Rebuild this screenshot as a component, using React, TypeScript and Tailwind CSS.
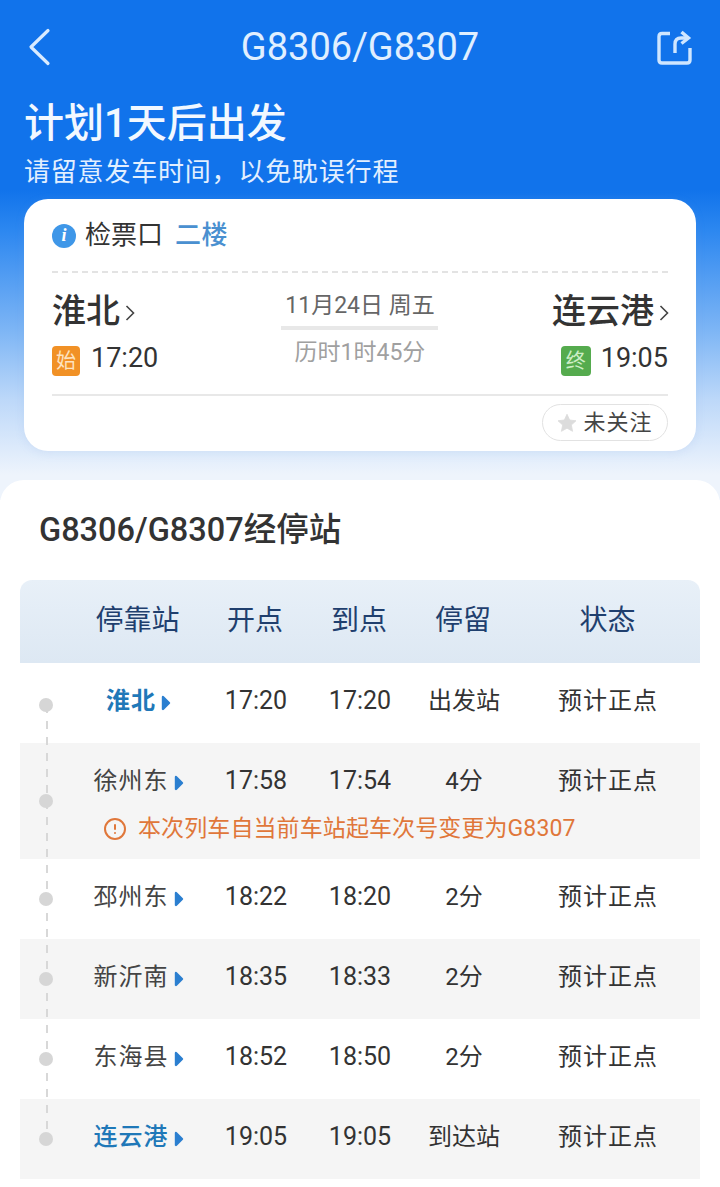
import { CircleAlert } from "lucide-react"

const stops = [
  { name: "淮北", depart: "17:20", arrive: "17:20", stay: "出发站", highlight: true, bold: true },
  { name: "徐州东", depart: "17:58", arrive: "17:54", stay: "4分", note: "本次列车自当前车站起车次号变更为G8307" },
  { name: "邳州东", depart: "18:22", arrive: "18:20", stay: "2分" },
  { name: "新沂南", depart: "18:35", arrive: "18:33", stay: "2分" },
  { name: "东海县", depart: "18:52", arrive: "18:50", stay: "2分" },
  { name: "连云港", depart: "19:05", arrive: "19:05", stay: "到达站", highlight: true },
]

function Chevron() {
  return (
    <svg width="10" height="18" viewBox="0 0 10 18" fill="none" className="ml-[5px] mr-[-1px] mt-[3px]">
      <path d="M1.5 2 L8.5 9 L1.5 16" stroke="#444" strokeWidth="1.6" />
    </svg>
  )
}

function Caret() {
  return (
    <svg width="10" height="16" viewBox="0 0 10 16" className="ml-[5px] mt-[3px]">
      <path d="M2 2 L8 8 L2 14 Z" fill="#2b7fd0" stroke="#2b7fd0" strokeWidth="2.4" strokeLinejoin="round" />
    </svg>
  )
}

export default function App() {
  return (
    <div className="w-[720px] h-[1187px] overflow-hidden bg-white font-['Roboto','Noto_Sans_CJK_SC',sans-serif]">
      {/* Blue header */}
      <div className="h-[500px] px-[24px] bg-[linear-gradient(to_bottom,#1173eb_0,#1173eb_190px,#2c87f0_230px,#7db5f5_330px,#bdd8f9_400px,#eef4fc_475px)]">
        <div className="h-[94px] flex items-center justify-between">
          <svg width="28" height="40" viewBox="0 0 28 40" fill="none">
            <path d="M24 3.5 L7 20 L24 36.5" stroke="#d9ebff" strokeWidth="3.2" strokeLinecap="round" strokeLinejoin="round" />
          </svg>
          <h1 className="ml-[12px] text-[38px] leading-none text-[#e0efff]">G8306/G8307</h1>
          <svg width="36" height="36" viewBox="0 0 36 36" fill="none" className="mr-[4px] mt-[2px]" stroke="#cfe6ff" strokeWidth="3.4">
            <path d="M14 3.5 H6 Q3 3.5 3 6.5 V30 Q3 33 6 33 H31 Q34 33 34 30 V18" />
            <path d="M19 23 V14 Q19 8 25 8 H32" />
            <path d="M25.5 2 L32.5 8 L25.5 13.5" />
          </svg>
        </div>

        <div className="text-[40px] leading-[56px] font-medium text-[#f2f8ff] mt-[2px]">计划1天后出发</div>
        <div className="text-[26px] leading-[40px] text-[#e2efff] tracking-[0.8px]">请留意发车时间，以免耽误行程</div>

        {/* Ticket card */}
        <div className="mt-[7px] h-[252px] rounded-[24px] bg-white px-[28px] shadow-[0_2px_10px_rgba(120,160,220,0.15)]">
          <div className="h-[72px] flex items-center pt-[1px]">
            <div className="w-[24px] h-[24px] rounded-full bg-[#3f97e8] flex items-center justify-center text-white text-[18px] font-bold italic font-['Liberation_Serif',serif]">
              i
            </div>
            <span className="ml-[9px] text-[26px] text-[#333]">检票口</span>
            <span className="ml-[12px] text-[26px] font-medium text-[#4a90d0] tracking-[0.5px]">二楼</span>
          </div>
          <div className="h-0 border-t-2 border-dashed border-[#e3e3e3]" />

          <div className="h-[121px] grid grid-cols-3">
            <div>
              <div className="h-[58px] flex items-center pt-[18px]">
                <span className="text-[34px] font-medium text-[#333]">淮北</span>
                <Chevron />
              </div>
              <div className="h-[46px] mt-[7px] flex items-center">
                <span className="w-[28px] h-[30px] rounded-[4px] bg-[#f19126] text-[#fde3c0] text-[20px] flex items-center justify-center">
                  始
                </span>
                <span className="ml-[11px] mb-[6px] text-[27px] text-[#333]">17:20</span>
              </div>
            </div>
            <div className="flex flex-col items-center pt-[16px]">
              <div className="text-[23px] leading-[34px] text-[#666] whitespace-nowrap">11月24日 周五</div>
              <div className="w-[157px] h-[4px] mt-[3px] bg-[#e8e8e8]" />
              <div className="text-[23px] leading-[34px] text-[#a0a0a0] mt-[6px] whitespace-nowrap">历时1时45分</div>
            </div>
            <div className="flex flex-col items-end">
              <div className="h-[58px] flex items-center pt-[18px]">
                <span className="text-[34px] font-medium text-[#333]">连云港</span>
                <Chevron />
              </div>
              <div className="h-[46px] mt-[7px] flex items-center">
                <span className="w-[30px] h-[30px] rounded-[4px] bg-[#55ab4e] text-[#cdeec6] text-[20px] flex items-center justify-center">
                  终
                </span>
                <span className="ml-[10px] mb-[6px] text-[27px] text-[#333]">19:05</span>
              </div>
            </div>
          </div>

          <div className="border-t-2 border-[#e8e8e8]" />
          <div className="flex justify-end mt-[8px]">
            <div className="w-[126px] h-[37px] rounded-full border border-[#e2e2e2] flex items-center justify-center">
              <svg width="20" height="20" viewBox="0 0 24 24" className="mr-[6px]">
                <path
                  d="M12 1.5 L15.2 8.4 L22.8 9.3 L17.2 14.4 L18.7 22 L12 18.2 L5.3 22 L6.8 14.4 L1.2 9.3 L8.8 8.4 Z"
                  fill="#dcdcdc"
                  stroke="#dcdcdc"
                  strokeLinejoin="round"
                />
              </svg>
              <span className="text-[22px] text-[#444] tracking-[1px]">未关注</span>
            </div>
          </div>
        </div>
      </div>

      {/* Stops sheet */}
      <div className="mt-[-20px] rounded-t-[24px] bg-white px-[20px]">
        <h2 className="h-[100px] flex items-center pl-[19px] text-[32.5px] font-medium text-[#333]">G8306/G8307经停站</h2>

        <div className="relative">
          <div className="grid grid-cols-[52px_131px_104px_104px_104px_185px] h-[83px] items-center rounded-t-[12px] bg-[linear-gradient(to_bottom,#e8f0f8,#dde8f3)] text-center text-[28px] text-[#1f3f6e] pb-[1px]">
            <div />
            <div>停靠站</div>
            <div>开点</div>
            <div>到点</div>
            <div>停留</div>
            <div>状态</div>
          </div>

          {stops.map((stop, i) => (
            <div key={stop.name} className={i % 2 === 1 ? "flex bg-[#f5f5f5]" : "flex bg-white"}>
              <div className={i === 0 ? "w-[52px] flex items-center justify-center pt-[3px]" : "w-[52px] flex items-center justify-center"}>
                <div className="relative z-10 w-[14px] h-[14px] rounded-full bg-[#d6d6d6]" />
              </div>
              <div className="flex-1">
                <div className="grid grid-cols-[132px_104px_104px_104px_184px] h-[74px] pt-[2px] items-center text-center text-[25px] text-[#333]">
                  <div
                    className={
                      stop.highlight
                        ? `flex items-center justify-center pl-[1px] text-[#1f78b8] ${stop.bold ? "font-bold" : "font-medium"}`
                        : "flex items-center justify-center pl-[1px] text-[#444]"
                    }
                  >
                    <span className="text-[24px] tracking-[1px]">{stop.name}</span>
                    <Caret />
                  </div>
                  <div>{stop.depart}</div>
                  <div>{stop.arrive}</div>
                  <div className="text-[24px]">{stop.stay}</div>
                  <div className="text-[24px] tracking-[1px]">预计正点</div>
                </div>
                {stop.note ? (
                  <div className="h-[43px] mt-[-1px] flex items-start pl-[31px] text-[#e0773a]">
                    <CircleAlert size={24} strokeWidth={2} className="mt-[1px]" />
                    <span className="ml-[11px] text-[23px] leading-[26px] tracking-[0.1px] whitespace-nowrap">{stop.note}</span>
                  </div>
                ) : (
                  <div className="h-[6px]" />
                )}
              </div>
            </div>
          ))}

          {/* Timeline line */}
          <div className="absolute left-[26px] top-[125px] w-[2px] h-[433px] bg-[repeating-linear-gradient(to_bottom,#d8d8d8_0,#d8d8d8_8px,transparent_8px,transparent_16px)]" />
        </div>
      </div>
    </div>
  )
}
